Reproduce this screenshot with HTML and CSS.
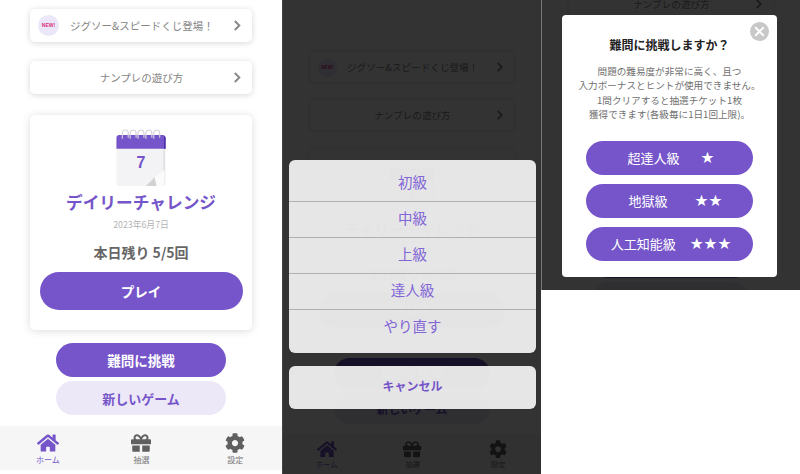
FILE: index.html
```html
<!DOCTYPE html>
<html lang="ja">
<head>
<meta charset="utf-8">
<title>ナンプレ</title>
<link rel="stylesheet" href="styles.css">
</head>
<body>
<svg class="defs" width="0" height="0">
  <symbol id="i-home" viewBox="0 0 576 512"><path d="M280.37 148.26L96 300.11V464a16 16 0 0 0 16 16l112.06-.29a16 16 0 0 0 15.92-16V368a16 16 0 0 1 16-16h64a16 16 0 0 1 16 16v95.64a16 16 0 0 0 16 16.05L464 480a16 16 0 0 0 16-16V300L295.67 148.26a12.19 12.19 0 0 0-15.3 0zM571.6 251.47L488 182.56V44.05a12 12 0 0 0-12-12h-56a12 12 0 0 0-12 12v72.61L318.47 43a48 48 0 0 0-61 0L4.34 251.47a12 12 0 0 0-1.6 16.9l25.5 31A12 12 0 0 0 45.15 301l235.22-193.74a12.19 12.19 0 0 1 15.3 0L530.9 301a12 12 0 0 0 16.9-1.6l25.5-31a12 12 0 0 0-1.7-16.93z"/></symbol>
  <symbol id="i-gift" viewBox="0 0 512 512"><path d="M32 448c0 17.7 14.3 32 32 32h160V320H32v128zm256 32h160c17.7 0 32-14.3 32-32V320H288v160zm192-320h-42.1c6.2-12.1 10.1-25.5 10.1-40 0-48.5-39.5-88-88-88-41.6 0-68.5 21.3-103 68.3-34.5-47-61.4-68.3-103-68.3-48.5 0-88 39.5-88 88 0 14.5 3.8 27.9 10.1 40H32c-17.7 0-32 14.3-32 32v80c0 8.8 7.2 16 16 16h480c8.8 0 16-7.2 16-16v-80c0-17.7-14.3-32-32-32zm-326.1 0c-22.1 0-40-17.9-40-40s17.9-40 40-40c19.9 0 34.6 3.3 86.1 80h-86.1zm206.1 0h-86.1c51.4-76.5 65.7-80 86.1-80 22.1 0 40 17.9 40 40s-17.9 40-40 40z"/></symbol>
  <symbol id="i-cog" viewBox="0 0 512 512"><path d="M487.4 315.7l-42.6-24.6c4.3-23.2 4.3-47 0-70.2l42.6-24.6c4.9-2.8 7.1-8.6 5.5-14-11.1-35.6-30-67.8-54.7-94.6-3.8-4.1-10-5.1-14.8-2.3L380.8 110c-17.9-15.4-38.5-27.3-60.8-35.1V25.8c0-5.6-3.9-10.5-9.4-11.7-36.7-8.2-74.3-7.8-109.2 0-5.5 1.2-9.4 6.1-9.4 11.7V75c-22.2 7.9-42.8 19.8-60.8 35.1L88.7 85.5c-4.9-2.8-11-1.9-14.8 2.3-24.7 26.7-43.6 58.9-54.7 94.6-1.7 5.4.6 11.2 5.5 14L67.3 221c-4.3 23.2-4.3 47 0 70.2l-42.6 24.6c-4.9 2.8-7.1 8.6-5.5 14 11.1 35.6 30 67.8 54.7 94.6 3.8 4.1 10 5.1 14.8 2.3l42.6-24.6c17.9 15.4 38.5 27.3 60.8 35.1v49.2c0 5.6 3.9 10.5 9.4 11.7 36.7 8.2 74.3 7.8 109.2 0 5.5-1.2 9.4-6.1 9.4-11.7v-49.2c22.2-7.9 42.8-19.8 60.8-35.1l42.6 24.6c4.9 2.8 11 1.9 14.8-2.3 24.7-26.7 43.6-58.9 54.7-94.6 1.5-5.5-.7-11.3-5.6-14.1zM256 336c-44.1 0-80-35.9-80-80s35.9-80 80-80 80 35.9 80 80-35.9 80-80 80z"/></symbol>
  <symbol id="i-chev" viewBox="0 0 10 14"><path d="M2 2l5 5-5 5" fill="none" stroke="currentColor" stroke-width="2.2"/></symbol>
  <symbol id="i-cal" viewBox="0 0 52 58">
    <rect x="1" y="6" width="50" height="52" rx="3" fill="#f3f3f5"/>
    <path d="M50 9v46a3 3 0 0 1-3 3h-1a3 3 0 0 0 3-3V9z" fill="#d4d4d8"/>
    <path d="M1 20V9a3 3 0 0 1 3-3h44a3 3 0 0 1 3 3v11z" fill="#7555c9"/>
    <path d="M49.500 7v13H51V9a3 3 0 0 0-1.500-2z" fill="#4a2fa8"/>
    <g fill="none" stroke="#d5d2de" stroke-width="1.200">
      <path d="M7 10V4a3 3 0 0 1 6 0v5"/><path d="M15 10V4a3 3 0 0 1 6 0v5"/><path d="M23 10V4a3 3 0 0 1 6 0v5"/><path d="M31 10V4a3 3 0 0 1 6 0v5"/><path d="M39 10V4a3 3 0 0 1 6 0v5"/>
    </g>
    <path d="M31 58l9-9 2 9z" fill="#d2d2d4"/>
    <path d="M40 49l10-7v13a3 3 0 0 1-3 3h-5z" fill="#fbfbfb"/>
  </symbol>
</svg>

<main class="shots">

  <!-- 1: home -->
  <section class="phone">
    <div class="home">
      <a class="row"><span class="badge">NEW!</span><span class="row-text">ジグソー&amp;スピードくじ登場！</span><svg class="chev"><use href="#i-chev"/></svg></a>
      <a class="row row-center"><span class="row-text">ナンプレの遊び方</span><svg class="chev"><use href="#i-chev"/></svg></a>
      <div class="daily">
        <div class="cal"><svg class="cal-img"><use href="#i-cal"/></svg><span class="cal-day">7</span></div>
        <h2 class="daily-title">デイリーチャレンジ</h2>
        <p class="daily-date">2023年6月7日</p>
        <p class="daily-left">本日残り 5/5回</p>
        <button class="btn btn-play">プレイ</button>
      </div>
      <button class="btn btn-sub">難問に挑戦</button>
      <button class="btn btn-sub btn-light">新しいゲーム</button>
      <nav class="tabs">
        <a class="tab tab-on"><svg class="tab-ico"><use href="#i-home"/></svg>ホーム</a>
        <a class="tab"><svg class="tab-ico"><use href="#i-gift"/></svg>抽選</a>
        <a class="tab"><svg class="tab-ico"><use href="#i-cog"/></svg>設定</a>
      </nav>
    </div>
  </section>

  <!-- 2: level sheet -->
  <section class="phone phone-dim">
    <div class="home home-small">
      <a class="row"><span class="badge">NEW!</span><span class="row-text">ジグソー&amp;スピードくじ登場！</span><svg class="chev"><use href="#i-chev"/></svg></a>
      <a class="row row-center"><span class="row-text">ナンプレの遊び方</span><svg class="chev"><use href="#i-chev"/></svg></a>
      <div class="daily">
        <div class="cal"><svg class="cal-img"><use href="#i-cal"/></svg><span class="cal-day">7</span></div>
        <h2 class="daily-title">デイリーチャレンジ</h2>
        <p class="daily-date">2023年6月7日</p>
        <p class="daily-left">本日残り 4/5回</p>
        <button class="btn btn-play">プレイ</button>
      </div>
      <button class="btn btn-sub">難問に挑戦</button>
      <button class="btn btn-sub btn-light">新しいゲーム</button>
      <nav class="tabs">
        <a class="tab tab-on"><svg class="tab-ico"><use href="#i-home"/></svg>ホーム</a>
        <a class="tab"><svg class="tab-ico"><use href="#i-gift"/></svg>抽選</a>
        <a class="tab"><svg class="tab-ico"><use href="#i-cog"/></svg>設定</a>
      </nav>
    </div>
    <div class="veil"></div>
    <div class="sheet">
      <ul class="sheet-list">
        <li>初級</li>
        <li>中級</li>
        <li>上級</li>
        <li>達人級</li>
        <li>やり直す</li>
      </ul>
      <div class="sheet-cancel">キャンセル</div>
    </div>
  </section>

  <!-- 3: hard mode dialog -->
  <section class="phone phone-dialog">
    <div class="home home-small home-up">
      <a class="row row-center"><span class="row-text">ナンプレの遊び方</span><svg class="chev"><use href="#i-chev"/></svg></a>
      <div class="daily"></div>
      <button class="btn btn-sub"></button>
      <button class="btn btn-sub btn-light"></button>
    </div>
    <div class="veil"></div>
    <div class="dialog">
      <span class="dialog-close"><svg viewBox="0 0 20 20"><path d="M5.500 5.500l9 9M14.500 5.500l-9 9" stroke="#fff" stroke-width="2"/></svg></span>
      <h3 class="dialog-title">難問に挑戦しますか？</h3>
      <p class="dialog-text">問題の難易度が非常に高く、且つ<br>入力ボーナスとヒントが使用できません。<br>1問クリアすると抽選チケット1枚<br>獲得できます(各級毎に1日1回上限)。</p>
      <button class="btn btn-level"><span>超達人級</span><span class="stars">★</span></button>
      <button class="btn btn-level btn-level-wide"><span>地獄級</span><span class="stars">★★</span></button>
      <button class="btn btn-level btn-level-tight"><span>人工知能級</span><span class="stars">★★★</span></button>
    </div>
  </section>

</main>
</body>
</html>
```

FILE: styles.css
```css
* { box-sizing: border-box; }
html, body { margin: 0; height: 100%; background: #fff; }
body {
  width: 800px;
  height: 474px;
  overflow: hidden;
  font-family: "Noto Sans CJK JP", "Noto Sans", sans-serif;
}
.defs { position: absolute; }
.shots {
  display: grid;
  grid-template-columns: 283px 258px 259px;
  height: 474px;
  align-items: start;
}

/* phones */
.phone {
  position: relative;
  height: 474px;
  overflow: hidden;
  background: #fff;
}
.phone:first-child { border-right: 1px solid #444; }
.phone-dialog { height: 290px; border-left: 1px solid #777; }

/* home screen */
.home {
  width: 282px;
  padding-top: 9px;
  display: flex;
  flex-direction: column;
  align-items: center;
}
.home-small { zoom: 0.915; padding-top: 57px; }
.home-up { padding-top: 0; margin-top: -12px; }

.row {
  display: flex;
  align-items: center;
  width: 222px;
  height: 33px;
  margin: 0 0 19px;
  padding: 0 10px 0 8px;
  background: #fff;
  border-radius: 5px;
  box-shadow: 0 1px 6px rgba(0, 0, 0, .16);
  color: #858585;
  font-size: 10.500px;
}
.row-text { flex: 1; }
.row-center .row-text { text-align: center; padding-left: 12px; }
.badge {
  width: 21px;
  height: 21px;
  margin-right: 11px;
  border-radius: 50%;
  background: #ece7f8;
  color: #d8337f;
  font: bold 5px/21px "Liberation Sans", sans-serif;
  text-align: center;
}
.chev { width: 9px; height: 13px; color: #888; }

.daily {
  width: 222px;
  height: 215px;
  margin-top: 2px;
  padding-top: 14px;
  background: #fff;
  border-radius: 5px;
  box-shadow: 0 1px 8px rgba(0, 0, 0, .14);
  display: flex;
  flex-direction: column;
  align-items: center;
}
.cal { position: relative; width: 52px; height: 57px; }
.cal-img { width: 52px; height: 57px; display: block; }
.cal-day {
  position: absolute;
  left: 0;
  right: 0;
  top: 24px;
  text-align: center;
  color: #7555c9;
  font: bold 16px/20px "Liberation Sans", sans-serif;
}
.daily-title {
  margin: 4px 0 0;
  color: #7555c9;
  font-size: 16.700px;
  line-height: 24px;
  font-weight: 700;
}
.daily-date {
  margin: 5px 0 0;
  color: #b4b4b4;
  font-size: 8.800px;
  line-height: 12px;
}
.daily-left {
  margin: 12px 0 0;
  color: #666;
  font-size: 14px;
  line-height: 18px;
  font-weight: 700;
}

.btn {
  display: block;
  border: 0;
  padding: 0;
  font-family: inherit;
  color: #fff;
  background: #7555c9;
  text-align: center;
}
.btn-play {
  width: 203px;
  height: 38px;
  margin-top: 11px;
  border-radius: 19px;
  font-size: 13.500px;
  font-weight: 700;
}
.btn-sub {
  width: 170px;
  height: 34px;
  margin-top: 13px;
  border-radius: 17px;
  font-size: 13.500px;
  font-weight: 700;
}
.btn-light {
  margin-top: 4px;
  background: #ece8f8;
  color: #7555c9;
  font-size: 13px;
}

.tabs {
  display: grid;
  grid-template-columns: repeat(3, 1fr);
  width: 282px;
  height: 44px;
  margin-top: 11px;
  padding: 0 0 0 1px;
  background: #f6f6f6;
}
.tab {
  display: flex;
  flex-direction: column;
  align-items: center;
  padding-top: 7px;
  color: #777;
  font-size: 8px;
  line-height: 11px;
}
.tab-ico { width: 22px; height: 20px; fill: #5f5f5f; margin-bottom: 1px; }
.tab-on { color: #7555c9; }
.tab-on .tab-ico { fill: #7555c9; }

/* dim layer */
.veil {
  position: absolute;
  inset: 0;
  background: rgba(0, 0, 0, .8);
}

/* action sheet */
.sheet {
  position: absolute;
  left: 6px;
  top: 160px;
  width: 247px;
  color: #8366d6;
  text-align: center;
}
.sheet-list {
  list-style: none;
  margin: 0;
  padding: 0;
  height: 193px;
  background: rgba(241, 241, 241, .94);
  border-radius: 6px;
  overflow: hidden;
}
.sheet-list li {
  height: 36px;
  font-size: 14.500px;
  line-height: 32px;
  border-bottom: 1px solid #b0b0b0;
}
.sheet-list li:first-child { height: 42px; line-height: 44px; }
.sheet-list li:last-child { height: 43px; border-bottom: 0; line-height: 32px; }
.sheet-cancel {
  height: 43px;
  margin-top: 13px;
  background: rgba(241, 241, 241, .94);
  border-radius: 6px;
  color: #7555c9;
  font-size: 12px;
  font-weight: 700;
  line-height: 40px;
}

/* hard mode dialog */
.dialog {
  position: absolute;
  left: 20px;
  top: 15px;
  width: 215px;
  height: 262px;
  padding-top: 21px;
  background: #fff;
  border-radius: 4px;
  display: flex;
  flex-direction: column;
  align-items: center;
}
.dialog-close {
  position: absolute;
  right: 8px;
  top: 7px;
  width: 19px;
  height: 19px;
  border-radius: 50%;
  background: #c8c8c8;
}
.dialog-close svg { display: block; width: 19px; height: 19px; }
.dialog-title {
  margin: 0;
  color: #222;
  font-size: 12px;
  line-height: 18px;
  font-weight: 700;
}
.dialog-text {
  margin: 10px 0 0;
  color: #707070;
  font-size: 9.600px;
  line-height: 14.400px;
  text-align: center;
  white-space: nowrap;
}
.btn-level {
  display: flex;
  align-items: center;
  justify-content: center;
  gap: 21px;
  width: 167px;
  height: 34px;
  margin-top: 9px;
  padding-left: 3px;
  border-radius: 17px;
  font-size: 13px;
}
.btn-level-wide { gap: 27px; padding-left: 12px; }
.btn-level-tight { gap: 14px; }
.dialog-text + .btn-level { margin-top: 19px; }
.stars { font-family: "DejaVu Sans", sans-serif; font-size: 15.500px; }
```
